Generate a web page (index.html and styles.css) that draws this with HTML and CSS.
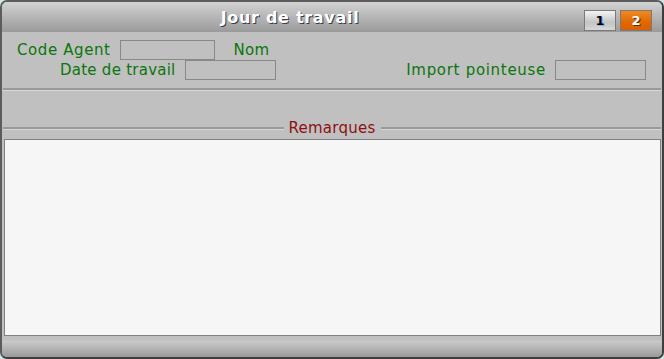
FILE: index.html
```html
<!DOCTYPE html>
<html lang="fr">
<head>
<meta charset="utf-8">
<title>Jour de travail</title>
<link rel="stylesheet" href="styles.css">
</head>
<body>
<div class="window">
  <div class="titlebar">
    <div class="title">Jour de travail</div>
    <div class="tabs">
      <div class="tab">1</div>
      <div class="tab active">2</div>
    </div>
  </div>
  <div class="content">
    <div class="form">
      <div class="row row1">
        <span class="label l-code">Code Agent</span>
        <span class="field f-code"></span>
        <span class="label nom">Nom</span>
      </div>
      <div class="row row2">
        <span class="label">Date de travail</span>
        <span class="field f-date"></span>
        <span class="spacer"></span>
        <span class="label l-import">Import pointeuse</span>
        <span class="field f-import"></span>
      </div>
    </div>
    <div class="sep"></div>
    <div class="legend">
      <span class="line"></span>
      <span class="legend-text">Remarques</span>
      <span class="line"></span>
    </div>
    <div class="memo"></div>
  </div>
  <div class="footer"></div>
</div>
</body>
</html>
```
FILE: styles.css
```css
html, body {
  margin: 0;
  padding: 0;
  background: #cfe9e6;
}
body {
  width: 664px;
  height: 359px;
  font-family: "DejaVu Sans", Verdana, sans-serif;
}
.window {
  box-sizing: border-box;
  width: 664px;
  height: 359px;
  border: 2px solid #5c5c5c;
  border-right-color: #3e3e3e;
  border-bottom-color: #3e3e3e;
  border-radius: 7px;
  background: #c0c0c0;
  display: flex;
  flex-direction: column;
  overflow: hidden;
}
.titlebar {
  height: 30px;
  flex: none;
  display: flex;
  align-items: flex-start;
  background: linear-gradient(#d2d2d2, #9a9a9a);
}
.title {
  flex: 1;
  text-align: center;
  font-weight: bold;
  font-size: 16px;
  letter-spacing: 0.7px;
  color: #ffffff;
  text-shadow: 1px 1px 0 #3a3a4a;
  padding-top: 6px;
  padding-right: 6px;
}
.tabs {
  display: flex;
  gap: 4px;
  padding-top: 8px;
  padding-right: 10px;
}
.tab {
  box-sizing: border-box;
  width: 32px;
  height: 21px;
  border: 1px solid #7a7a7a;
  background: linear-gradient(#f4f4f4, #c4c4c4 60%, #d8d8d8);
  font-weight: bold;
  font-size: 13px;
  color: #000;
  text-align: center;
  line-height: 19px;
  text-shadow: 1px 1px 0 #7ab0ff;
}
.tab.active {
  background: linear-gradient(#f08a20, #e06800 60%, #d86000);
  color: #fff;
  text-shadow: 1px 1px 0 #503010;
}
.content {
  flex: 1;
  display: flex;
  flex-direction: column;
}
.form {
  padding-top: 8px;
}
.row {
  display: flex;
  align-items: center;
  height: 20px;
}
.row1 {
  padding-left: 15px;
}
.row2 {
  padding-left: 58px;
  padding-right: 16px;
}
.label {
  color: #0b760b;
  font-size: 15px;
  letter-spacing: 0.25px;
  margin-right: 9px;
}
.l-code { letter-spacing: 0.6px; }
.l-import { letter-spacing: 0.7px; }
.nom {
  margin-left: 19px;
}
.field {
  box-sizing: border-box;
  height: 20px;
  border: 1px solid #888888;
  background: #c0c0c0;
}
.f-code { width: 95px; }
.f-date { width: 91px; }
.f-import { width: 91px; }
.spacer { flex: 1; }
.sep {
  margin: 8px 1px 0 1px;
  border-top: 2px solid #9a9a9a;
  border-bottom: 1px solid #d6d6d6;
}
.legend {
  display: flex;
  align-items: center;
  margin: 28px 1px 0 1px;
  height: 18px;
}
.line {
  flex: 1;
  border-top: 2px solid #9a9a9a;
  border-bottom: 1px solid #d6d6d6;
}
.legend-text {
  color: #8c1010;
  font-size: 15px;
  letter-spacing: 0.25px;
  padding: 0 5px;
}
.memo {
  box-sizing: border-box;
  margin: 2px 1px 1px 2px;
  flex: 1;
  background: #f6f6f6;
  border: 1px solid #808080;
}
.footer {
  height: 20px;
  flex: none;
  background: linear-gradient(#c0c0c0 0, #c0c0c0 3px, #cacaca 4px, #9a9a9a);
}
```
